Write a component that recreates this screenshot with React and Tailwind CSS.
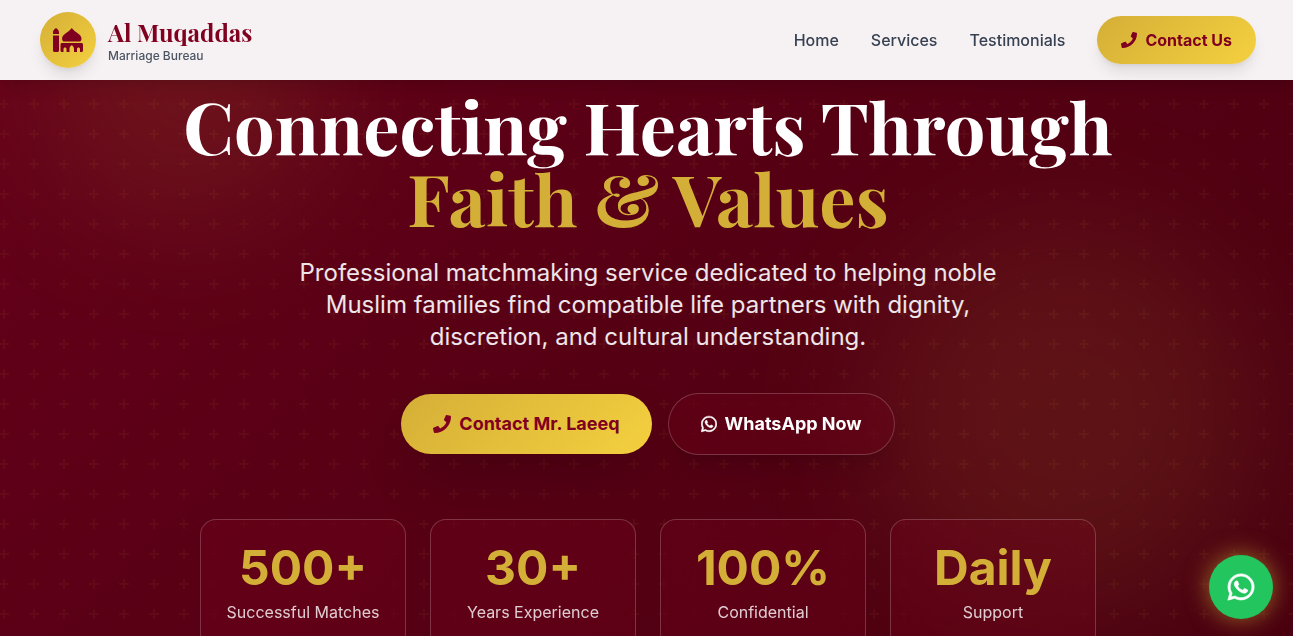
import { FaMosque, FaPhone, FaWhatsapp } from "react-icons/fa";

const navLinks = [
  { label: "Home", href: "#home" },
  { label: "Services", href: "#services" },
  { label: "Testimonials", href: "#testimonials" },
];

const stats = [
  { value: "500+", label: "Successful Matches" },
  { value: "30+", label: "Years Experience" },
  { value: "100%", label: "Confidential" },
  { value: "Daily", label: "Support" },
];

const Header = () => {
  return (
    <header className="fixed inset-x-0 top-0 z-20 bg-[#f6f2f3] pl-[3px] shadow-lg">
      <div className="max-w-7xl mx-auto px-8 h-20 flex items-center justify-between">
        <a href="#home" className="flex items-center gap-3">
          <span className="w-14 h-14 rounded-full bg-linear-[135deg] from-[#d4af37] to-[#f4d03f] text-[#800020] shadow-lg flex items-center justify-center">
            <FaMosque className="w-[30px] h-6" />
          </span>
          <span className="flex flex-col">
            <span className="font-['Playfair_Display',serif] text-2xl font-bold text-[#800020]">
              Al Muqaddas
            </span>
            <span className="text-xs font-medium text-[#4b5563]">Marriage Bureau</span>
          </span>
        </a>

        <nav className="flex items-center gap-8">
          {navLinks.map((link) => (
            <a key={link.label} href={link.href} className="font-medium text-[#374151]">
              {link.label}
            </a>
          ))}
          <a
            href="#contact"
            className="flex items-center gap-2 px-6 py-3 rounded-full bg-linear-[135deg] from-[#d4af37] to-[#f4d03f] font-bold text-[#800020] shadow-lg"
          >
            <FaPhone />
            Contact Us
          </a>
        </nav>
      </div>
    </header>
  );
};

const Backdrop = () => {
  return (
    <div className="absolute inset-0 overflow-hidden" aria-hidden="true">
      <svg className="absolute inset-0 w-full h-full opacity-6">
        <defs>
          <pattern id="plus" width="30" height="30" patternUnits="userSpaceOnUse">
            <path d="M3 9h2v4h4v2H5v4H3v-4h-4v-2h4zM29 13h1v2h-1z" fill="#d4af37" />
          </pattern>
        </defs>
        <rect width="100%" height="100%" fill="url(#plus)" />
      </svg>
      <div className="absolute -top-16 left-10 w-72 h-72 rounded-full bg-[#d4af37]/10 blur-3xl" />
      <div className="absolute top-56 right-9 w-96 h-96 rounded-full bg-[#d4af37]/10 blur-3xl" />
    </div>
  );
};

const App = () => {
  return (
    <div className="h-screen overflow-hidden font-['Inter',sans-serif]">
      <Header />

      <main
        id="home"
        className="relative min-h-full bg-linear-[135deg] from-[#66001a] via-[#560014] to-[#4a0010] pl-[3px]"
      >
        <Backdrop />

        <div className="relative max-w-7xl mx-auto px-8 pt-[89px] text-center">
          <h1 className="font-['Playfair_Display',serif] text-7xl leading-none font-bold text-white mb-6">
            Connecting Hearts Through
            <span className="block text-[#d4af37]">Faith & Values</span>
          </h1>

          <p className="max-w-3xl mx-auto mb-10 text-2xl text-white/90">
            Professional matchmaking service dedicated to helping noble Muslim families find
            compatible life partners with dignity, discretion, and cultural understanding.
          </p>

          <div className="flex items-center justify-center gap-4 mb-16">
            <a
              href="#contact"
              className="flex items-center gap-2 px-8 py-4 rounded-full bg-linear-[135deg] from-[#d4af37] to-[#f4d03f] text-lg font-bold text-[#800020] shadow-2xl"
            >
              <FaPhone />
              Contact Mr. Laeeq
            </a>
            <a
              href="#whatsapp"
              className="flex items-center gap-2 px-8 py-4 rounded-full border border-white/20 bg-[#80002033] backdrop-blur-xl text-lg font-bold text-white shadow-xl"
            >
              <FaWhatsapp className="w-4" strokeWidth="14" />
              WhatsApp Now
            </a>
          </div>

          <div className="grid grid-cols-4 gap-6 max-w-4xl mx-auto">
            {stats.map((stat) => (
              <div
                key={stat.label}
                className="p-6 rounded-2xl border border-white/20 bg-[#80002040] backdrop-blur-xl"
              >
                <p className="text-5xl font-bold text-[#d4af37] mb-2">{stat.value}</p>
                <p className="text-white/80">{stat.label}</p>
              </div>
            ))}
          </div>
        </div>
      </main>

      <a
        href="#whatsapp"
        aria-label="Chat on WhatsApp"
        className="fixed right-5 bottom-[17px] z-20 w-16 h-16 rounded-full bg-[#22c55e] text-white flex items-center justify-center shadow-[0_0_25px_rgba(212,175,55,0.6)]"
      >
        <FaWhatsapp className="text-3xl" strokeWidth="12" />
      </a>
    </div>
  );
};

export default App;
